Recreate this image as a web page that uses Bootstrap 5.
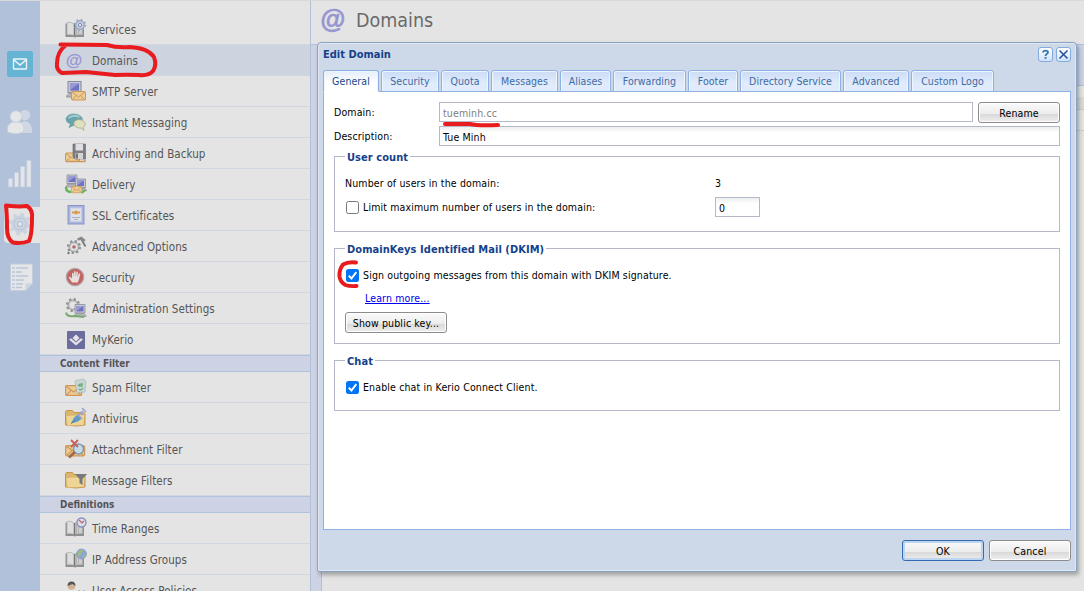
<!DOCTYPE html>
<html lang="en">
<head>
<meta charset="utf-8">
<title>Domains</title>
<meta name="viewport" content="width=device-width, initial-scale=1">
<link href="https://cdn.jsdelivr.net/npm/bootstrap@5.3.0/dist/css/bootstrap.min.css" rel="stylesheet">
<style>
body{font-family:"DejaVu Sans Condensed","DejaVu Sans",sans-serif;font-stretch:condensed;font-size:10.5px;line-height:14px;color:#000;background:#e4e4e4;width:1084px;height:591px;overflow:hidden}
.shell{height:591px;border-top:1px solid #d8d8d8}
.rail{width:40px;background:#b1c1d9;padding-top:50px}
.rail svg{display:block}
.rail-tab{width:36px;height:36px;background:#e4e4e4;border-radius:4px 0 0 4px;margin-left:4px;margin-top:19px;padding:4px 0 0 4px}
.side{width:271px;background:#e4e4e4;border-right:1px solid #b1c1d9;padding-top:13px;overflow:hidden}
.side-item{height:31px;border-bottom:1px solid #d0d7e2;padding:2px 0 0 24px;color:#555;font-size:11.5px;gap:4px;flex:none;white-space:nowrap;letter-spacing:.06px}
.side-item svg{width:24px;height:24px;flex:none;margin-bottom:2px}
.side-item.current{background:#cdd3df}
.side-head{height:17px;flex:none;background:#cdd3e5;border:solid #b0c2dc;border-width:1px 0;padding-left:20px;font-weight:700;font-size:9.9px;line-height:15px;color:#555}
.main-head{height:44px;border-bottom:1px solid #b1c1d9;background:#e4e4e4;padding-left:8px;gap:9px;color:#6a6a6a;font-size:19.5px;flex:none;padding-bottom:3px}
.main-body{background:#cdd3e5}
.grid-panel{background:#e4e4e4;border:solid #b1c1d9;border-width:1px 0 0 1px;margin:40px 0 0 10px}
.grid-row{height:21px;border-bottom:1px dotted #bbb}
.dlg{left:317px;top:42px;width:760px;height:530px;background:#cdd9e8;border:1px solid #8aa2c2;border-radius:4px 4px 2px 2px;box-shadow:inset 0 0 0 1px #dfe8f3,2px 3px 4px rgba(0,0,0,.3);padding:0 5px}
.dlg-head{height:27px;padding:0 0 4px;color:#15428b;font-weight:700;font-size:11px}
.tool{width:15px;height:15px;border:1px solid #84abdb;border-radius:3px;background:linear-gradient(#fff,#cfe2fa)}
.tool svg{display:block}
.tabs-row{height:22px;gap:2px;position:relative;z-index:1;margin-bottom:-1px}
.tab-item{height:22px;border:1px solid #8db2e3;border-radius:3px 3px 0 0;background:linear-gradient(#cbdcf5,#e0ebfc 60%);color:#416aa3;text-align:center;line-height:20px;box-shadow:inset 1px 1px 0 #eef5ff,inset -1px 0 0 #eef5ff;white-space:nowrap;letter-spacing:.08px}
.tab-item.on{background:linear-gradient(#e4edfa,#fff 60%);border-bottom-color:#fff;color:#15498b}
.pane{height:439px;background:#fff;border:1px solid #8db2e3;padding:10px 10px 0;letter-spacing:.14px}
.frow{height:21px}
.frow>span{width:105px;flex:none;line-height:20px}
.field{height:20px;border:1px solid #b5b8c8;background:linear-gradient(#edf0f0,#fff 6px);padding:0 3px;line-height:20px}
.field.off{background:#fff;color:#808080}
.push{border:1px solid #8c8c8c;border-radius:3px;background:linear-gradient(#fafafa,#ececec 58%,#d9d9d9 59%,#efefef);box-shadow:inset 0 0 0 1px #fff;height:21px;line-height:20px;text-align:center;white-space:nowrap;letter-spacing:.14px}
.push.main{border-color:#356aae;box-shadow:inset 0 0 0 2px #bcd5f2}
.group{border:1px solid #b5b8c8;margin-bottom:16px;padding-left:10px}
.group h6{display:table;background:#fff;color:#15428b;font:inherit;font-size:11px;font-weight:700;line-height:14px;margin:-7px 0 0 0;padding:1px 2px 0;height:14px;white-space:nowrap;letter-spacing:.06px}
.group h6+div{margin-top:11px}
.tick{width:13px;height:13px;border:1px solid #767676;border-radius:2.5px;background:#fff;flex:none;margin:0 4px 0 1px}
.tick.yes{border:0;background:#0075f5}
.tick svg{display:block}
.pen{left:0;top:0;pointer-events:none}
</style>
</head>
<body>
<div class="shell d-flex">
  <nav class="rail flex-shrink-0">
    <svg width="40" height="26" viewBox="0 0 40 26"><rect x="7" width="26" height="26" rx="2" fill="#65b4d4"/><rect x="13.500" y="8" width="13" height="10" rx=".5" fill="none" stroke="#edf5f8" stroke-width="1.300"/><path d="M14 9l6 5 6-5" fill="none" stroke="#edf5f8" stroke-width="1.600"/></svg>
    <svg width="40" height="30" viewBox="0 0 40 30" style="margin-top:31px"><g fill="#ced7e3"><circle cx="25" cy="7" r="5.200"/><path d="M19 25V17q1-3 6-4 6 1 7 8v4z"/></g><g fill="#e4e6e8" stroke="#c3cddb" stroke-width=".8"><path d="M7.500 24q-1-8 5-10l7 0q6 2 4 10-8 3.500-16 0z"/><circle cx="16" cy="8.500" r="5.800"/></g></svg>
    <svg width="40" height="30" viewBox="0 0 40 30" style="margin-top:20px"><g fill="#e3e5e8" stroke="#c3cedd" stroke-width=".7"><rect x="8.300" y="20.500" width="4.200" height="8.500"/><rect x="14.500" y="14.500" width="4.200" height="14.500"/><rect x="20.600" y="8.500" width="4.200" height="20.500"/><rect x="26.800" y="2.500" width="4.200" height="26.500"/></g></svg>
    <div class="rail-tab"><svg width="26" height="26" viewBox="0 0 26 26"><g fill="none" stroke="#cbd3df"><circle cx="12" cy="13" r="6.500" stroke-width="4.500"/><circle cx="12" cy="13" r="9.800" stroke-width="3" stroke-dasharray="3.700 4"/><circle cx="12" cy="13" r="6" stroke="#b7c5da" stroke-width="1"/><circle cx="12" cy="13" r="2.800" stroke="#b0c0d8" stroke-width="1.500"/></g></svg></div>
    <svg width="40" height="30" viewBox="0 0 40 30" style="margin-top:19px"><path d="M10.500 2h22v19.500l-7 7h-15z" fill="#e4e6e8" stroke="#c3cddc"/><path d="M32.500 21.500h-7v7z" fill="#ccd5e0"/><path d="M12 6h3m1 0h12M12 10h3m1 0h6M12 14h3m1 0h12M12 18h3m1 0h8M12 22h3m1 0h7M12 25.500h3m1 0h6" stroke="#b9c7da" stroke-width="1.500"/></svg>
  </nav>

  <aside class="side d-flex flex-column flex-shrink-0">
    <svg width="0" height="0" style="position:absolute">
      <defs>
        <g id="book"><path d="M1.500 6.500h1.500v11.500h15.500V8h1.500v12H12l-1 .8L10 20H1.500z" fill="#8f9092"/><path d="M3 5.500q4-1 7 1.500v11.500q-3-2-7-1z" fill="#dedede" stroke="#a9a9aa" stroke-width=".7"/><path d="M11 7q3-2.500 7.500-1.500v12q-4.500-1-7.500 1z" fill="#cfcfcf" stroke="#9b9b9c" stroke-width=".7"/><path d="M12.500 8v9M14.500 7v9.500" stroke="#b2b2b2"/><path d="M10.500 7v12" stroke="#757678" stroke-width="1.200"/></g>
        <g id="mail"><rect x=".5" y=".5" width="14" height="8.500" rx="1" fill="#ebcc95" stroke="#cf9657"/><path d="M1 1l6.500 5L14 1M1 9l4.500-4.500M14 9L9.500 4.500" fill="none" stroke="#cf9657"/></g>
        <g id="pc"><path d="M0 0h10v8.500H0z" fill="#c9cbd4" stroke="#888a99" stroke-width=".8"/><path d="M1.500 1.500h7v5.500h-7z" fill="#6f72bf"/><path d="M1.500 1.500h7l-7 5z" fill="#9799d5"/><path d="M-1 11l2-2h8l2 2v1H-1z" fill="#b5b5b8" stroke="#88898d" stroke-width=".6"/></g>
        <g id="cog" fill="none" stroke="#8e8f91"><circle r="4.200" stroke-width="2" stroke="#c6c7c8"/><circle r="6" stroke-width="2.200" stroke-dasharray="2.200 2.510"/><circle r="5" stroke-width=".7"/></g>
        <g id="folder"><path d="M1.500 19V5.500l1-1h6l1.500 2h9.500l1.500 1V19q-8 2-19.500 0z" fill="#d9b66c" stroke="#c99749"/><path d="M2.500 10l18-1-1 10-16 .5z" fill="#edd596"/></g>
      </defs>
    </svg>
    <div class="side-item d-flex align-items-center"><svg viewBox="0 0 24 24"><use href="#book"/><circle cx="16" cy="8" r="4.200" fill="#cdd3e0" stroke="#9aa8c2" stroke-width="1.500"/><circle cx="16" cy="8" r="5.500" fill="none" stroke="#9aa8c2" stroke-width="1.500" stroke-dasharray="1.800 2.520"/><circle cx="16" cy="8" r="1.700" fill="#e4e4e4" stroke="#7d8bad"/></svg>Services</div>
    <div class="side-item current d-flex align-items-center"><svg viewBox="0 0 24 24"><text x="1.500" y="17.500" font-size="17" font-style="italic" font-weight="700" font-family="Liberation Sans" fill="#9696d2">@</text></svg>Domains</div>
    <div class="side-item d-flex align-items-center"><svg viewBox="0 0 24 24"><g transform="translate(4 2.500) scale(1.300)"><use href="#pc"/></g><use href="#mail" x="7" y="12"/></svg>SMTP Server</div>
    <div class="side-item d-flex align-items-center"><svg viewBox="0 0 24 24"><path d="M5 17.500l1.500-3.500Q1.500 12 2 8.500 3.500 4 10 4q8 .5 8.500 6-.5 5-8 5-2.500 1-5.500 2.500z" fill="#68a4ac" stroke="#6b9ea6" stroke-width=".7"/><path d="M4.500 8q5-4 11-1" stroke="#a3cccb" fill="none" stroke-width="2"/><path d="M20 20.500l-1-3q3-2 2-5-2-3-6-3-6 1-5 5 2 4 7 3.500z" fill="#dfe0bf" stroke="#aaa98a" stroke-width=".8"/></svg>Instant Messaging</div>
    <div class="side-item d-flex align-items-center"><svg viewBox="0 0 24 24"><use href="#mail" x="1" y="11.500"/><path d="M9 3h12.500v15H11l-2-2z" fill="#7d7e86" stroke="#66676d" stroke-width=".6"/><rect x="11.500" y="3" width="7.500" height="6.500" fill="#dedee3"/><rect x="11.500" y="12" width="7.500" height="6" fill="#d4d4d4"/><path d="M13 12.500v5" stroke="#555" stroke-width="1.500"/><path d="M2 20.500h19v-2" fill="none" stroke="#cf9657" stroke-width="1.500"/></svg>Archiving and Backup</div>
    <div class="side-item d-flex align-items-center"><svg viewBox="0 0 24 24"><use href="#pc" x="3" y="3"/><use href="#pc" x="11.500" y="7"/><path d="M2 15q0 5 5 5" fill="none" stroke="#65b65c" stroke-width="2.500"/><g transform="translate(7 14) scale(.75)"><use href="#mail"/></g><path d="M18 21l3-3" stroke="#65b65c" stroke-width="2"/></svg>Delivery</div>
    <div class="side-item d-flex align-items-center"><svg viewBox="0 0 24 24"><rect x="4" y="2.500" width="16" height="18.500" fill="#a9b4e0" stroke="#8795c5"/><rect x="6.500" y="5" width="11" height="13.500" fill="#e0e1e4" stroke="#c5cce0"/><path d="M8 8.500h2.500l1-1h1l1 1H16v2h-2.500l-1 1h-1l-1-1H8z" fill="#dc9a50"/><path d="M8 14.500h8M10 16.500h4" stroke="#aab1c7"/></svg>SSL Certificates</div>
    <div class="side-item d-flex align-items-center"><svg viewBox="0 0 24 24"><use href="#cog" x="10" y="13"/><circle cx="10" cy="13" r="1.800" fill="#b96464"/><path d="M5 18l-1 2" stroke="#77787b" stroke-width="2"/><path d="M17.500 5.500l4 7" stroke="#77787b" stroke-width="1.800"/><path d="M13 4.500l4.500-2 4 3.500-1.500 2-3-2-3 .5z" fill="#88898b"/></svg>Advanced Options</div>
    <div class="side-item d-flex align-items-center"><svg viewBox="0 0 24 24"><circle cx="11" cy="12" r="8.700" fill="#c46461" stroke="#b2a7a8" stroke-width="1.200"/><path d="M8 17.500l-3.200-5 1-1 2.200 2V8.300q1-1 1.500.2L10 12V6.700q1-1.200 1.600 0V12l.8-5q1-1 1.500.3L13.500 12l1.500-3.500q1.200-.5 1.200.8l-1.200 5-1.200 3.200z" fill="#e6dfde"/></svg>Security</div>
    <div class="side-item d-flex align-items-center"><svg viewBox="0 0 24 24"><use href="#cog" x="9" y="9"/><use href="#pc" x="11" y="8.500"/><path d="M2 16.500q1 5 9 3.500l9 1" fill="none" stroke="#79aa70" stroke-width="2"/></svg>Administration Settings</div>
    <div class="side-item d-flex align-items-center"><svg viewBox="0 0 24 24"><rect x="3" y="4" width="18" height="18" rx="1" fill="#6c6c9d"/><path d="M12 7.500l3.500 3.500-3.500 3.500L8.500 11z" fill="#e3e3e8"/><path d="M5 12.500l2-1.300 5 4.300 5-4.300 2 1.300-7 6z" fill="#e3e3e8"/></svg>MyKerio</div>
    <div class="side-head">Content Filter</div>
    <div class="side-item d-flex align-items-center"><svg viewBox="0 0 24 24"><g transform="translate(1 10) scale(1.150)"><use href="#mail"/></g><path d="M11 6l8-2 3 2-1 11-8 1z" fill="#c8d6d5" stroke="#9faeb1" stroke-width=".6"/><path d="M14 11q2-3 4-1m0-2v3h-3M19 13q-2 3-4 1" fill="none" stroke="#6eac78" stroke-width="1.300"/></svg>Spam Filter</div>
    <div class="side-item d-flex align-items-center"><svg viewBox="0 0 24 24"><use href="#folder"/><path d="M7 17.500l3-6 4-3 4 4-4 3z" fill="#619cc9"/><path d="M7 17.500l4-3" stroke="#3f78a9"/><path d="M13 8l5 5M15 9l4-4M18 2l4 4M16 6l3 3" stroke="#9aa2cf" stroke-width="1.600"/></svg>Antivirus</div>
    <div class="side-item d-flex align-items-center"><svg viewBox="0 0 24 24"><g transform="translate(1 8) scale(1.350 1.200)"><use href="#mail"/></g><circle cx="14.500" cy="12" r="5" fill="#c6dbe4" stroke="#7a9bb5" stroke-width="1.500"/><path d="M5 20.500l6-5.500" stroke="#a76846" stroke-width="3"/><path d="M7 3l7 7m0-7l-7 7" stroke="#ca5d55" stroke-width="1.800"/></svg>Attachment Filter</div>
    <div class="side-item d-flex align-items-center"><svg viewBox="0 0 24 24"><use href="#folder"/><path d="M11 6h12l-4.500 5v6l-3-2v-4z" fill="#77797c"/></svg>Message Filters</div>
    <div class="side-head">Definitions</div>
    <div class="side-item d-flex align-items-center"><svg viewBox="0 0 24 24"><use href="#book"/><circle cx="17.500" cy="6.500" r="4.500" fill="#dcdde6" stroke="#8b8fc0" stroke-width="1.400"/><path d="M15 4l3 3 2-2" fill="none" stroke="#b96571" stroke-width="1.200"/></svg>Time Ranges</div>
    <div class="side-item d-flex align-items-center"><svg viewBox="0 0 24 24"><use href="#book"/><circle cx="17.500" cy="7" r="5" fill="#8ba6d4" stroke="#8998bf" stroke-width=".7"/><path d="M13.500 6q2-4 5-3l1 2-3 1v3l-2 1zM19 8l3-1-1 3-2 1z" fill="#9dbb83"/></svg>IP Address Groups</div>
    <div class="side-item d-flex align-items-center"><svg viewBox="0 0 24 24"><path d="M2 22q0-8 6-8t6 8z" fill="#88898c"/><circle cx="7.500" cy="8" r="3.800" fill="#cfb394"/><path d="M3.500 8q0-4.500 4-4.500T11.500 8l-3-2z" fill="#555"/><path d="M5 13l3 3 3-3" fill="#e4e4e4"/><path d="M13 15h9M15 12.500v3m5-3v3" stroke="#999" stroke-width="2"/></svg>User Access Policies</div>
  </aside>

  <main class="flex-grow-1 d-flex flex-column">
    <header class="main-head d-flex align-items-center"><svg width="28" height="30" viewBox="0 0 28 30"><text x="1" y="22" font-size="25.500" font-style="italic" font-weight="700" font-family="Liberation Sans" fill="#9696d2" stroke="#9696d2" stroke-width=".6">@</text></svg><span>Domains</span></header>
    <section class="main-body flex-grow-1 d-flex flex-column"><div class="grid-panel flex-grow-1"><div style="height:11px"></div><div class="grid-row" style="height:13px;background:#d9d9d9"></div><div class="grid-row"></div></div></section>
  </main>
</div>

<div class="dlg position-absolute" role="dialog">
  <div class="dlg-head d-flex align-items-center"><span class="me-auto">Edit Domain</span>
    <span class="tool" style="margin-right:3px"><svg width="13" height="13" viewBox="0 0 13 13"><path d="M4 4.600q0-2 2.500-2t2.500 1.700q0 1-1.300 1.700-1.200.6-1.200 2" fill="none" stroke="#3873ae" stroke-width="1.800"/><path d="M5.600 9h1.900v1.800H5.600z" fill="#3873ae"/></svg></span>
    <span class="tool"><svg width="13" height="13" viewBox="0 0 13 13"><path d="M2.500 2.500l8 8m0-8l-8 8" stroke="#254f94" stroke-width="1.500"/></svg></span></div>
  <div class="tabs-row d-flex">
    <div class="tab-item on" style="width:56px">General</div><div class="tab-item" style="width:58px">Security</div><div class="tab-item" style="width:48px">Quota</div><div class="tab-item" style="width:67px">Messages</div><div class="tab-item" style="width:51px">Aliases</div><div class="tab-item" style="width:73px">Forwarding</div><div class="tab-item" style="width:50px">Footer</div><div class="tab-item" style="width:101px">Directory Service</div><div class="tab-item" style="width:66px">Advanced</div><div class="tab-item" style="width:83px">Custom Logo</div>
  </div>
  <div class="pane">
    <div class="frow d-flex align-items-start"><span>Domain:</span><div class="field off flex-grow-1">tueminh.cc</div><div class="push" style="width:82px;margin-left:5px">Rename</div></div>
    <div class="frow d-flex align-items-start" style="margin-top:3px"><span>Description:</span><div class="field flex-grow-1">Tue Minh</div></div>
    <section class="group" style="height:76px;margin-top:9px"><h6>User count</h6>
      <div class="d-flex"><span style="width:370px">Number of users in the domain:</span><span>3</span></div>
      <div class="d-flex align-items-center" style="height:20px;margin-top:7px"><i class="tick"></i><span style="width:352px">Limit maximum number of users in the domain:</span><div class="field" style="width:45px">0</div></div>
    </section>
    <section class="group" style="height:96px"><h6>DomainKeys Identified Mail (DKIM)</h6>
      <div class="d-flex align-items-center"><i class="tick yes"><svg width="13" height="13" viewBox="0 0 13 13"><path d="M2.800 6.800l2.700 2.700 4.800-6.300" fill="none" stroke="#fff" stroke-width="2"/></svg></i><span>Sign outgoing messages from this domain with DKIM signature.</span></div>
      <div style="margin:9px 0 7px 20px"><a href="#" class="text-decoration-underline" style="color:#00e">Learn more...</a></div>
      <div class="push" style="width:102px">Show public key...</div>
    </section>
    <section class="group" style="height:51px"><h6>Chat</h6>
      <div class="d-flex align-items-center"><i class="tick yes"><svg width="13" height="13" viewBox="0 0 13 13"><path d="M2.800 6.800l2.700 2.700 4.800-6.300" fill="none" stroke="#fff" stroke-width="2"/></svg></i><span>Enable chat in Kerio Connect Client.</span></div>
    </section>
  </div>
  <div class="d-flex justify-content-end" style="margin-top:10px;gap:5px"><div class="push main" style="width:82px">OK</div><div class="push" style="width:82px">Cancel</div></div>
</div>

<svg class="pen position-absolute" width="1084" height="591" viewBox="0 0 1084 591" fill="none" stroke="#e81c1f" stroke-width="4" stroke-linecap="round" stroke-linejoin="round">
  <path d="M60.500 44.500L107 45Q117 48 130 47 148 48 154 57 157 65 153 71 149 76 139 75 126 74.500 115 75L86 72 62 73Q56 70 57 63 57 52 66 45"/>
  <path d="M6 205.500Q19 207 27 206 33 210 32 218 32 235 29 241 22 244 13 242.500 7 239 7 228 7 215 6 205.500"/>
  <path d="M445 124h25q8 2 28 1"/>
  <path d="M356 262.500q-8-1-13 2-4 5-3.500 12 1 6 6 8.500 4 1.500 11 1"/>
</svg>
<script src="https://cdn.jsdelivr.net/npm/bootstrap@5.3.0/dist/js/bootstrap.bundle.min.js"></script>
</body>
</html>
